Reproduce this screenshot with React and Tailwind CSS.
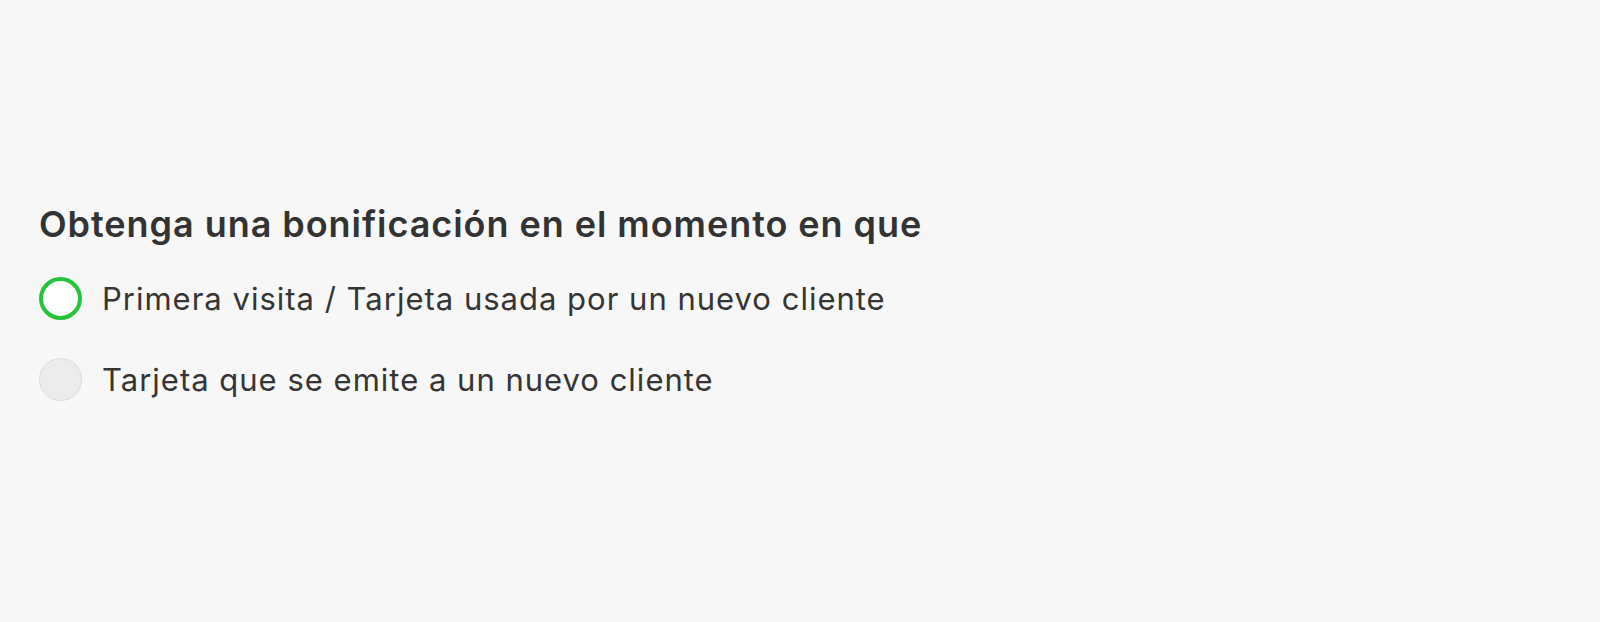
export default function App() {
  const options = [
    { label: "Primera visita / Tarjeta usada por un nuevo cliente", checked: true },
    { label: "Tarjeta que se emite a un nuevo cliente", checked: false },
  ];
  return (
    <div className="w-[1600px] h-[622px] bg-[#f7f7f7] font-['Inter',sans-serif] text-[#333333] pt-[201px] pl-[39px]">
      <h2 className="text-[36px] font-semibold leading-[46px] tracking-[0.95px]">
        Obtenga una bonificación en el momento en que
      </h2>
      <div className="mt-[30px] flex flex-col gap-[38px]">
        {options.map((o) => (
          <label key={o.label} className="flex items-center gap-[20px]">
            <span
              className={
                o.checked
                  ? "w-[43px] h-[43px] rounded-full border-4 border-[#23c43a] bg-white"
                  : "w-[43px] h-[43px] rounded-full border border-[#dcdcdc] bg-[#ececec]"
              }
            />
            <span className="text-[31px] leading-[43px] tracking-[1px] text-[#353535]">{o.label}</span>
          </label>
        ))}
      </div>
    </div>
  );
}
